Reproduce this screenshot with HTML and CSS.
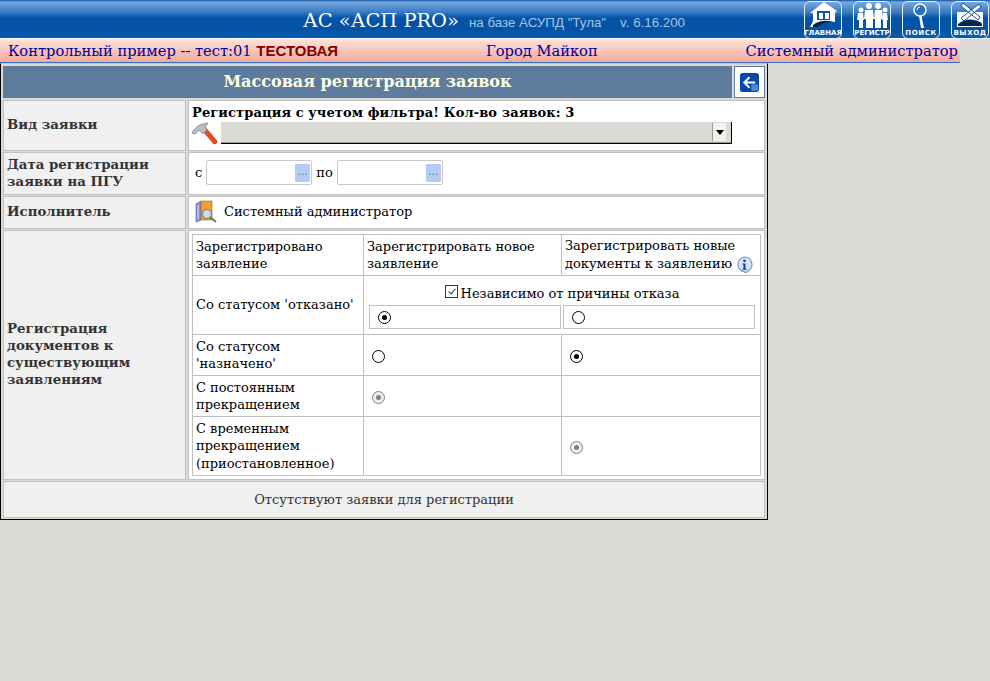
FILE: index.html
```html
<!DOCTYPE html>
<html>
	<head>
		<meta charset="UTF-8">
		<title>Массовая регистрация заявок</title>
		<link rel="stylesheet" href="styles.css">
	</head>
	<body>
		<div class="top">
			<div class="top-title">
				<span class="app-name">АС «АСП PRO»</span>
				<span class="app-sub">на базе АСУПД "Тула"</span>
				<span class="app-ver">v. 6.16.200</span>
			</div>
			<div class="top-btns">
				<a class="tile">
					<svg width="36" height="27" viewBox="0 0 36 27"><path fill="#fff" d="M19 0 L32 9 L30 11 L30 20 L22 19 Q14 19 9 25 L5 25 Q8 20 8 18 L8 11 L5 11 Z"/><path fill="#0a55a8" d="M12 9h13v9h-13z"/><path fill="#fff" d="M14 11h4v6h-4zM20 11h4v6h-4z"/><path fill="#04274f" d="M8 23q7-5 15-4l5 1q-10 0-15 5H8z"/></svg>
					<span>ГЛАВНАЯ</span>
				</a>
				<a class="tile">
					<svg width="36" height="27" viewBox="0 0 36 27"><g fill="#fff"><circle cx="15" cy="4" r="3"/><path d="M11 8h8l1 9h-1v9h-7v-9h-2z"/><circle cx="24" cy="4" r="3"/><path d="M21 8h7l1 9h-2v9h-6v-9h-1z"/><circle cx="7" cy="8" r="2.500"/><path d="M4 11h5l1 7h-1v8h-4v-8h-2z"/><circle cx="31" cy="8" r="2.500"/><path d="M29 11h4l1 7h-1v8h-4v-8h-1z"/></g></svg>
					<span>РЕГИСТР</span>
				</a>
				<a class="tile">
					<svg width="36" height="27" viewBox="0 0 36 27"><circle cx="17" cy="8" r="6" fill="#2a6fbc" stroke="#fff" stroke-width="1.500"/><path d="M14 8a3 3 0 0 1 3-3" fill="none" stroke="#fff"/><path d="M16 14h2.500l2.500 12h-3z" fill="#fff"/></svg>
					<span class="wide">ПОИСК</span>
				</a>
				<a class="tile">
					<svg width="36" height="27" viewBox="0 0 36 27"><path fill="#fff" d="M5 10h26v15h-26z"/><path d="M6 22q8-6 16-4t8 4v2h-24z" fill="#04274f"/><path d="M11 1l17 14-2 3L9 4zM27 2l2 3-17 14-3-3z" fill="#fff" stroke="#0a55a8"/></svg>
					<span class="wide">ВЫХОД</span>
				</a>
			</div>
		</div>

		<div class="status">
			<span>Контрольный пример -- тест:01 <b>ТЕСТОВАЯ</b></span>
			<span>Город Майкоп</span>
			<span>Системный администратор</span>
		</div>

		<div class="panel">
			<div class="panel-head">
				<div class="panel-title">Массовая регистрация заявок</div>
				<a class="back">
					<svg width="19" height="19" viewBox="0 0 20 20"><rect width="20" height="20" rx="3" fill="#0a47ad"/><rect x="12" y="12" width="7" height="7" fill="#4f86d8"/><path d="M16 10H5M10 4.500L4.500 10l5.500 5.500" fill="none" stroke="#fff" stroke-width="2"/></svg>
				</a>
			</div>

			<div class="form">
				<div class="lbl">Вид заявки</div>
				<div class="val val-type">
					<div class="strong">Регистрация с учетом фильтра! Кол-во заявок: 3</div>
					<div class="type-row">
						<svg width="26" height="24" viewBox="0 0 26 24"><path d="M10 8l3-3 12 14q0 3-3 3z" fill="#ee4a1c" stroke="#a82808" stroke-width=".7"/><path d="M0 11q4-9 16-10l-2 3q-1 1 0 2l1 2-4 4-2-2q-1-2-3-1l-3 3z" fill="#bcbcc0" stroke="#77777c" stroke-width=".7"/></svg>
						<div class="combo"><span class="combo-btn"><i></i></span></div>
					</div>
				</div>

				<div class="lbl">Дата регистрации заявки на ПГУ</div>
				<div class="val val-date">
					<span>с</span>
					<span class="date"><i>...</i></span>
					<span>по</span>
					<span class="date"><i>...</i></span>
				</div>

				<div class="lbl">Исполнитель</div>
				<div class="val val-user">
					<svg width="24" height="24" viewBox="0 0 24 24"><path d="M2 4l5-3v19l-5 2z" fill="#8e8ee0" stroke="#55558f" stroke-width=".6"/><path d="M7 1h11v19H7z" fill="#f0a030" stroke="#a86a10" stroke-width=".6"/><path d="M4 5v14" stroke="#d8d8f4"/><circle cx="13" cy="14" r="4.500" fill="#c8dcec" stroke="#6a7d8c"/><path d="M16 17l6 5" stroke="#7c6a5a" stroke-width="2"/></svg>
					<span>Системный администратор</span>
				</div>

				<div class="lbl">Регистрация документов к существующим заявлениям</div>
				<div class="val val-docs">
					<table class="docs">
						<tr class="r1">
							<td class="c1">Зарегистрировано заявление</td>
							<td class="c2">Зарегистрировать новое заявление</td>
							<td class="c3">Зарегистрировать новые документы к заявлению <svg class="info" width="17" height="17" viewBox="0 0 16 16"><path d="M8 1a7 7 0 0 1 3 13.300L9 16l-1-1.100A7 7 0 0 1 8 1z" fill="#d6e6f8" stroke="#5f94d0"/><circle cx="8" cy="4.500" r="1.300" fill="#1440a8"/><path d="M6 7h3v5h1v1H6v-1h1V8H6z" fill="#1440a8"/></svg></td>
						</tr>
						<tr class="r2">
							<td>Со статусом 'отказано'</td>
							<td colspan="2" class="refuse">
								<div class="check-line"><i class="check"></i>Независимо от причины отказа</div>
								<div class="radio-pair">
									<div><i class="radio on"></i></div>
									<div><i class="radio"></i></div>
								</div>
							</td>
						</tr>
						<tr class="r3">
							<td>Со статусом 'назначено'</td>
							<td class="pick"><i class="radio"></i></td>
							<td class="pick"><i class="radio on"></i></td>
						</tr>
						<tr class="r4">
							<td>С постоянным прекращением</td>
							<td class="pick"><i class="radio dis"></i></td>
							<td></td>
						</tr>
						<tr class="r5">
							<td>С временным прекращением (приостановленное)</td>
							<td></td>
							<td class="pick"><i class="radio dis"></i></td>
						</tr>
					</table>
				</div>

				<div class="foot">Отсутствуют заявки для регистрации</div>
			</div>
		</div>
	</body>
</html>
```

FILE: styles.css
```css
html, body{ margin: 0; padding: 0; height: 100%;}
body{ background-color: #dbdad5; font: 13px/17.5px "DejaVu Serif", serif; color: #000; overflow: hidden;}

/* шапка */
.top{ height: 39px; display: flex; background: linear-gradient(#0a55a8 0, #78a8dc 2px, #3a7cc4 12px, #0453a6 18px, #0453a6 30px, #0b5cb0 38px, #fff 38px, #fff 39px); box-sizing: border-box;}
.top-title{ margin-left: 303px; display: flex; align-items: baseline; height: 38px; line-height: 41px; white-space: nowrap;}
.app-name{ font-size: 19.450px; color: #fff;}
.app-sub{ margin-left: 10px; font: 13.330px/41px "Liberation Sans", sans-serif; color: #a4c4e6;}
.app-ver{ margin-left: 14px; font: 13.330px/41px "Liberation Sans", sans-serif; color: #a4c4e6;}
.top-btns{ margin-left: auto; margin-right: 1px; display: flex; gap: 11px; padding-top: 1px;}
.tile{ width: 36px; height: 36px; border: 1px solid #e6eef8; border-radius: 6px; display: flex; flex-direction: column; align-items: center; overflow: hidden;}
.tile svg{ display: block; flex: none;}
.tile span{ font: bold 7px/8px "DejaVu Sans", sans-serif; color: #fff; white-space: nowrap;}
.tile .wide{ letter-spacing: .6px;}

/* строка статуса */
.status{ width: 960px; height: 24px; box-sizing: border-box; padding: 1px 2px 0 8px; display: flex; justify-content: space-between; background: linear-gradient(#fde3dc, #f2a99a); border-bottom: 1px solid #3a6cc0; font-size: 14.670px; line-height: 22px; color: #00009c; white-space: nowrap;}
.status b{ font: bold 15px "Liberation Sans", sans-serif; color: #800000;}

/* панель */
.panel{ width: 768px; height: 457px; box-sizing: border-box; padding: 2px 0 0 2px; border-right: 1px solid #000; border-bottom: 1px solid #000; border-left: 1px solid #000; border-top: 1px solid #c8c8c8; display: flex; flex-direction: column; gap: 2px;}
.panel-head{ display: flex; gap: 2px; height: 32px;}
.panel-title{ width: 729px; background-color: #5d7b9d; text-align: center; font: bold 16px/32px "DejaVu Serif", serif; color: #ffffe6;}
.back{ width: 31px; box-sizing: border-box; background-color: #fff; border: 1px solid #5d7b9d; display: flex; align-items: center; justify-content: center;}

.form{ display: grid; grid-template-columns: 183px 577px; grid-template-rows: 51px 43px 33px 250px 37px; gap: 1px 2px;}
.lbl{ background-color: #f0f0f0; border: 1px solid #c0c0c0; box-sizing: border-box; padding: 0 3px 2px; display: flex; align-items: center; font-weight: bold; font-size: 13.330px; line-height: 17px; color: #333;}
.val{ background-color: #fff; border: 1px solid #c0c0c0; box-sizing: border-box;}
.foot{ grid-column: 1 / 3; background-color: #f0f0f0; border: 1px solid #c0c0c0; box-sizing: border-box; text-align: center; line-height: 35px; color: #333;}

.val-type{ padding: 3px 3px 0;}
.strong{ font-weight: bold; letter-spacing: .1px;}
.type-row{ display: flex; align-items: flex-start;}
.combo{ width: 510px; height: 21px; margin-left: 3px; background-color: #dbdad5; border-right: 1px solid #000; border-bottom: 1px solid #000; box-shadow: inset 0 -1px 0 #999; display: flex; justify-content: flex-end; align-items: center;}
.combo-btn{ width: 13px; height: 18px; margin-right: 5px; border-left: 1px solid #999; background-color: #f2f2ee; display: flex; align-items: center; justify-content: center;}
.combo-btn i{ border-left: 4px solid transparent; border-right: 4px solid transparent; border-top: 5px solid #000;}

.val-date{ display: flex; align-items: center; gap: 4px; padding: 0 0 2px 6px;}
.date{ width: 103px; height: 23px; border: 1px solid #c8c8c8; border-radius: 2px; display: flex; justify-content: flex-end; align-items: center; padding-right: 1px;}
.date i{ width: 15px; height: 18px; background-color: #b6cbf3; border-radius: 1px; font: 11px/16px "DejaVu Sans", sans-serif; color: #5577aa; text-align: center;}

.val-user{ display: flex; align-items: center; gap: 6px; padding: 0 0 2px 5px;}

.val-docs{ padding: 3px;}
.docs{ width: 568px; height: 241px; border-collapse: collapse; table-layout: fixed;}
.docs td{ border: 1px solid #c0c0c0; padding: 2px 3px; vertical-align: middle; box-sizing: border-box;}
.docs .pick{ padding: 4px 3px 2px 8px;}
.c1{ width: 171px;}
.c2{ width: 198px;}
.c3{ width: 199px;}
.r1{ height: 41px;}
.r2{ height: 59px;}
.r3{ height: 41px;}
.r4{ height: 41px;}
.r5{ height: 59px;}
.info{ vertical-align: -5px;}
.docs .refuse{ padding: 0 5px 5px;}
.check-line{ text-align: center; height: 29px; line-height: 35px;}
.check{ display: inline-block; width: 11px; height: 11px; border: 1px solid #333; vertical-align: 0; margin-right: 3px; position: relative;}
.check:after{ content: ''; position: absolute; left: 4px; top: 1px; width: 3px; height: 6px; border-right: 1px solid #333; border-bottom: 1px solid #333; transform: rotate(40deg);}
.radio-pair{ display: flex; gap: 2px;}
.radio-pair div{ width: 192px; height: 24px; border: 1px solid #c0c0c0; display: flex; align-items: center; padding-left: 8px; box-sizing: border-box;}
.radio{ display: inline-block; vertical-align: middle; width: 11px; height: 11px; border: 1px solid #000; border-radius: 50%; position: relative; background-color: #fff;}
.radio.on:after, .radio.dis:after{ content: ''; position: absolute; left: 3px; top: 3px; width: 5px; height: 5px; border-radius: 50%; background-color: #000;}
.radio.dis{ border-color: #808080; background-color: #eee;}
.radio.dis:after{ background-color: #808080;}
```
